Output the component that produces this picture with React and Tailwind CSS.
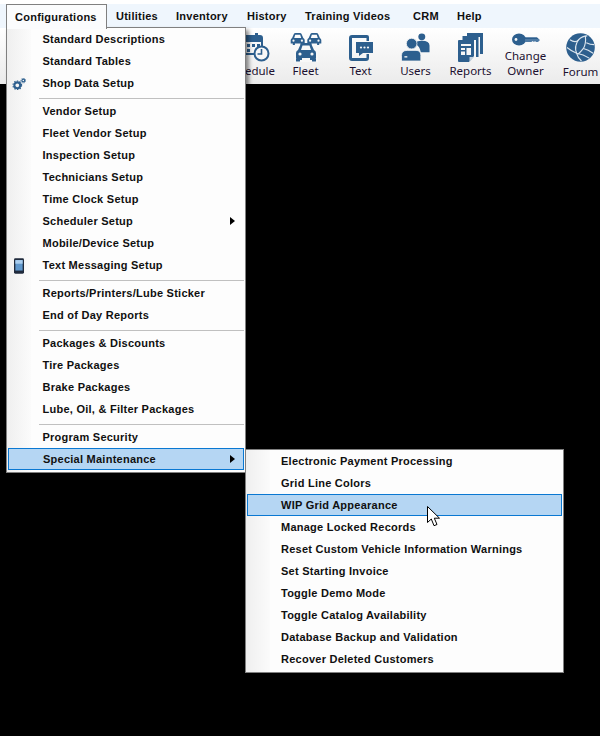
import React from "react";

const C = "#2d5f8e";

const groups = [
  [
    { t: "Standard Descriptions" },
    { t: "Standard Tables" },
    { t: "Shop Data Setup" },
  ],
  [
    { t: "Vendor Setup" },
    { t: "Fleet Vendor Setup" },
    { t: "Inspection Setup" },
    { t: "Technicians Setup" },
    { t: "Time Clock Setup" },
    { t: "Scheduler Setup", arrow: true },
    { t: "Mobile/Device Setup" },
    { t: "Text Messaging Setup" },
  ],
  [{ t: "Reports/Printers/Lube Sticker" }, { t: "End of Day Reports" }],
  [
    { t: "Packages & Discounts" },
    { t: "Tire Packages" },
    { t: "Brake Packages" },
    { t: "Lube, Oil, & Filter Packages" },
  ],
  [{ t: "Program Security" }, { t: "Special Maintenance", arrow: true, active: true }],
];

const sub = [
  { t: "Electronic Payment Processing" },
  { t: "Grid Line Colors" },
  { t: "WIP Grid Appearance", active: true },
  { t: "Manage Locked Records" },
  { t: "Reset Custom Vehicle Information Warnings" },
  { t: "Set Starting Invoice" },
  { t: "Toggle Demo Mode" },
  { t: "Toggle Catalog Availability" },
  { t: "Database Backup and Validation" },
  { t: "Recover Deleted Customers" },
];

function Gears() {
  return (
    <svg width="14" height="12" viewBox="0 0 16 14">
      <circle cx="6" cy="8.5" r="3.4" fill="none" stroke={C} strokeWidth="2.4" />
      <circle cx="6" cy="8.5" r="5" fill="none" stroke={C} strokeWidth="1.4" strokeDasharray="1.6 1.6" />
      <circle cx="13" cy="3" r="1.6" fill="none" stroke={C} strokeWidth="1.4" />
      <circle cx="13" cy="3" r="2.8" fill="none" stroke={C} strokeWidth="1" strokeDasharray="1.2 1.2" />
    </svg>
  );
}

function Phone() {
  return (
    <svg width="10" height="16" viewBox="0 0 11 17">
      <rect x="0" y="0" width="11" height="17" rx="1.5" fill="#1f2a3c" />
      <rect x="1.5" y="2" width="8" height="11.5" fill="#5f97cc" />
      <rect x="1.5" y="2" width="8" height="4" fill="#a9cdee" />
    </svg>
  );
}

function Row({ item, pad }) {
  return (
    <div
      className={`relative h-[22px] flex items-center border ${
        item.active ? "bg-[#b5d6f3] border-[#0a78d2]" : "border-transparent"
      }`}
    >
      <span className={`${pad} whitespace-nowrap`}>{item.t}</span>
      {item.arrow && (
        <span className="ml-auto mr-[8px] w-0 h-0 border-y-[4px] border-y-transparent border-l-[5px] border-l-black" />
      )}
    </div>
  );
}

function Tool({ label, children }) {
  return (
    <div className="w-[55px] shrink-0 flex flex-col items-center pt-[4px]">
      <div className="h-[31px] w-full flex justify-center">{children}</div>
      <div className="text-center leading-[15px] whitespace-nowrap">{label}</div>
    </div>
  );
}

function Calendar() {
  return (
    <svg width="38" height="29" viewBox="0 0 38 29" className="mt-[1px]">
      <rect x="4" y="3" width="26" height="18" rx="2" fill="none" stroke={C} strokeWidth="2" />
      <rect x="4" y="3" width="26" height="6" fill={C} />
      <rect x="10" y="0" width="3" height="5" fill={C} />
      <rect x="23" y="0" width="3" height="5" fill={C} />
      <g fill={C}>
        <rect x="10" y="11" width="3" height="3" />
        <rect x="15" y="11" width="3" height="3" />
        <rect x="20" y="11" width="3" height="3" />
        <rect x="25" y="11" width="3" height="3" />
        <rect x="10" y="16" width="3" height="3" />
        <rect x="15" y="16" width="3" height="3" />
      </g>
      <circle cx="29.5" cy="20.5" r="7" fill="#f8f8f8" stroke={C} strokeWidth="2" />
      <path d="M29.5 16V21H25.5" fill="none" stroke={C} strokeWidth="1.6" />
    </svg>
  );
}

function Car({ x, y, s = 1 }) {
  return (
    <g transform={`translate(${x} ${y}) scale(${s})`} fill={C}>
      <path d="M3 7 L5.5 1.5 Q6 0 8 0 H14 Q16 0 16.5 1.5 L19 7 Q21 8 21 10 V15 H18 V17 H15 V15 H7 V17 H4 V15 H1 V10 Q1 8 3 7 Z M6 7 H16 L14.5 2.5 H7.5 Z" fillRule="evenodd" />
      <circle cx="5" cy="11" r="1.6" fill="#f6f6f6" />
      <circle cx="17" cy="11" r="1.6" fill="#f6f6f6" />
    </g>
  );
}

function Fleet() {
  return (
    <svg width="32" height="29" viewBox="0 0 32 29" className="mt-[1px]">
      <Car x={0} y={0} s={0.7} />
      <Car x={16.6} y={0} s={0.7} />
      <path d="M4 12 H28 V29 H4 Z" fill="#f8f8f8" />
      <Car x={5} y={10} s={1} />
      <rect x="6" y="25" width="4" height="3.6" rx="0.6" fill={C} />
      <rect x="22" y="25" width="4" height="3.6" rx="0.6" fill={C} />
    </svg>
  );
}

function TextIcon() {
  return (
    <svg width="24" height="26" viewBox="0 0 24 26" className="mt-[3px]">
      <path d="M3 0 H18 Q20 0 20 2 V6 H17.5 V3 H3 V23 H17.5 V19 H20 V23 Q20 26 17 26 H3 Q0 26 0 23 V3 Q0 0 3 0 Z" fill={C} />
      <path d="M7 7 H24 V18 H14 L10 21 V18 H7 Z" fill={C} />
      <circle cx="12" cy="12.5" r="1.1" fill="#f6f6f6" />
      <circle cx="15.5" cy="12.5" r="1.1" fill="#f6f6f6" />
      <circle cx="19" cy="12.5" r="1.1" fill="#f6f6f6" />
    </svg>
  );
}

function Users() {
  return (
    <svg width="30" height="28" viewBox="0 0 30 29" className="mt-[1px]">
      <circle cx="21" cy="4" r="3.6" fill={C} />
      <path d="M14 11 Q15 8 21 8 Q29 8 29 13 V20 H20 Q19 14 14 11 Z" fill={C} />
      <circle cx="10.5" cy="11" r="5.5" fill={C} stroke="#f6f6f6" strokeWidth="0.8" />
      <path d="M0 29 V23 Q0 18 6 18 H15 Q20 18 20 23 V29 Z" fill={C} stroke="#f6f6f6" strokeWidth="0.8" />
      <rect x="3" y="24" width="3" height="1.4" fill="#f6f6f6" />
    </svg>
  );
}

function Reports() {
  return (
    <svg width="25" height="29" viewBox="0 0 25 29" className="mt-[1px]">
      <path d="M9 0 H25 V21 H22 V4 H9 Z" fill={C} />
      <path d="M4.5 3 H20.5 V24 H18 V7 H4.5 Z" fill={C} />
      <path d="M0 8 Q0 7 1 7 H16 V23 L11 29 H1 Q0 29 0 28 Z" fill={C} />
      <path d="M11.5 29 L16 24 H11.5 Z" fill="#c3d1de" />
      <rect x="3" y="11" width="10" height="2" fill="#f6f6f6" />
      <rect x="3" y="15" width="4" height="2" fill="#f6f6f6" />
      <rect x="8.5" y="15" width="4.5" height="7" fill="#f6f6f6" />
      <rect x="3" y="18.5" width="4" height="3.5" fill="#f6f6f6" />
    </svg>
  );
}

function Key() {
  return (
    <svg width="28" height="13" viewBox="0 0 28 13" className="mt-[1px]">
      <ellipse cx="7" cy="6.5" rx="7" ry="6" fill={C} />
      <circle cx="4" cy="6.5" r="1.4" fill="#f6f6f6" />
      <path d="M13 4.5 H25 L28 7 L26 9 H24 L23 8 L22 9 L20.5 8 L19.5 9 H13 Z" fill="#4f7ba5" />
      <path d="M13 4.5 H25 L26.5 6 H13 Z" fill={C} />
    </svg>
  );
}

function Globe() {
  return (
    <svg width="29" height="29" viewBox="0 0 30 30">
      <circle cx="15" cy="15" r="14.8" fill={C} />
      <g fill="none" stroke="#dbe5ee" strokeWidth="1.2">
        <path d="M4 7 Q10 11 13 7 Q17 3 22 3" />
        <path d="M13 7 Q8 14 11 21 Q12 25 16 29" />
        <path d="M1 15 Q6 19 11 21 Q18 22 24 26" />
        <path d="M20 3 Q21 11 18 16 Q14 21 12 22" />
        <path d="M21 10 Q25 12 29 12" />
        <path d="M18 16 Q23 17 28 21" />
      </g>
    </svg>
  );
}

function Cursor() {
  return (
    <svg width="15" height="21" viewBox="0 0 15 21" className="absolute left-[427px] top-[506px]">
      <path d="M0.5 0.5 V16.5 L4.3 13 L7 19.7 L10 18.5 L7.3 12.2 H12.5 Z" fill="#fff" stroke="#000" strokeWidth="1" />
    </svg>
  );
}

export default function App() {
  return (
    <div className="relative w-[600px] h-[736px] bg-black overflow-hidden font-['Liberation_Sans',Arial,sans-serif]">
      <div className="h-[4px] bg-white" />
      <div className="h-[24px] bg-[#eff6fd] flex pl-[6px] text-[11px] font-bold tracking-[0.25px] text-[#101010] leading-[24px]">
        <div className="w-[101px] h-[25px] relative z-30 bg-[#fbfcfd] border border-b-0 border-[#808080] pl-[8px] whitespace-nowrap">Configurations</div>
        <div className="pl-[9px] w-[69px]">Utilities</div>
        <div className="w-[71px]">Inventory</div>
        <div className="w-[58px]">History</div>
        <div className="w-[108px] whitespace-nowrap">Training Videos</div>
        <div className="w-[44px]">CRM</div>
        <div>Help</div>
      </div>
      <div className="h-[56px] bg-gradient-to-b from-[#ffffff] to-[#ebebeb] flex pl-[223px] font-['Noto_Sans',sans-serif] text-[11.5px] text-[#1c1030]">
        <Tool label="Schedule"><Calendar /></Tool>
        <Tool label="Fleet"><Fleet /></Tool>
        <Tool label="Text"><TextIcon /></Tool>
        <Tool label="Users"><Users /></Tool>
        <Tool label="Reports"><Reports /></Tool>
        <div className="w-[55px] shrink-0 flex flex-col items-center pt-[4px] leading-[15px] text-center">
          <Key />
          <div className="mt-[2px]">Change</div>
          <div>Owner</div>
        </div>
        <div className="w-[55px] shrink-0 flex flex-col items-center pt-[5px] leading-[15px]">
          <Globe />
          <div className="mt-[2px]">Forum</div>
        </div>
      </div>

      {/* Main dropdown */}
      <div className="absolute left-[6px] top-[27px] w-[240px] h-[446px] z-20 bg-[#fdfdfd] border border-[#808080] shadow-[3px_3px_4px_rgba(0,0,0,0.45)] text-[11px] font-bold tracking-[0.25px] text-[#101010]">
        <div className="absolute left-0 top-0 bottom-0 w-[24px] bg-gradient-to-r from-[#efefef] to-[#fbfbfb]" />
        <div className="absolute left-[5px] top-[50px]"><Gears /></div>
        <div className="absolute left-[7px] top-[230px]"><Phone /></div>
        <div className="relative px-[1px]">
          {groups.map((g, i) => (
            <div key={i}>
              {i > 0 && (
                <div className="h-[6px] pt-[4px] pl-[31px]">
                  <div className="h-px w-full bg-[#c0c0c0]" />
                </div>
              )}
              {g.map((it) => (
                <Row key={it.t} item={it} pad={it.active ? "pl-[34px]" : "pl-[33.5px]"} />
              ))}
            </div>
          ))}
        </div>
      </div>

      {/* Submenu */}
      <div className="absolute left-[245px] top-[449px] w-[319px] h-[224px] z-20 bg-[#fdfdfd] border border-[#808080] shadow-[3px_3px_4px_rgba(0,0,0,0.45)] text-[11px] font-bold tracking-[0.25px] text-[#101010]">
        <div className="absolute left-0 top-0 bottom-0 w-[24px] bg-gradient-to-r from-[#efefef] to-[#fbfbfb]" />
        <div className="relative px-[1px]">
          {sub.map((it) => (
            <Row key={it.t} item={it} pad="pl-[33px]" />
          ))}
        </div>
      </div>

      <div className="z-40 absolute inset-0 pointer-events-none"><Cursor /></div>
    </div>
  );
}
